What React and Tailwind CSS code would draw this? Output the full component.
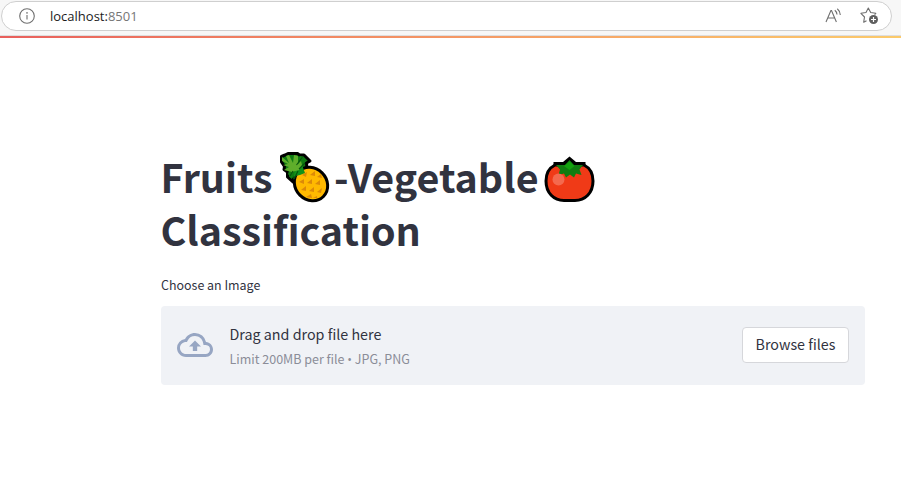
function InfoIcon() {
  return (
    <svg className="ml-[17px] size-4 shrink-0" viewBox="0 0 16 16" fill="none" stroke="#6f6f6f">
      <circle cx="8" cy="8" r="7.300" strokeWidth="1.1" />
      <path d="M8 7v4.500" strokeWidth="1.1" />
      <circle cx="8" cy="4.900" r=".8" fill="#6f6f6f" stroke="none" />
    </svg>
  );
}

function ReadAloudIcon() {
  return (
    <svg className="h-4 w-[17px]" viewBox="0 0 17 16" fill="none" stroke="#6f6f6f" strokeWidth="1.1">
      <path d="M1 14 5.900 2.500h.6L11.400 14M2.800 10h6.800" />
      <path d="M9.800 2.200q2 1.500 2.200 4.300M12.300.8q2.700 2.200 3 6.200" />
    </svg>
  );
}

function AddFavoriteIcon() {
  return (
    <svg className="h-[18px] w-[19px]" viewBox="0 0 19 18" fill="none">
      <path
        d="M6.500 13.700 3.700 15.200l.8-5.200L.9 6.300 6 5.500 8.300 1l2.400 4.500 5.100.8-1.200 1.300"
        stroke="#6f6f6f"
        strokeWidth="1.1"
        strokeLinejoin="round"
      />
      <circle cx="13.500" cy="12.500" r="4.500" fill="#5f5f5f" />
      <path d="M13.500 10v5M11 12.500h5" stroke="#fff" strokeWidth="1.2" />
    </svg>
  );
}

function Pineapple() {
  return (
    <svg className="-my-1 ml-[6px] mr-[4.500px] inline-block h-[52px] w-[51px] align-[-6px]" viewBox="0 0 51 52">
      <path
        d="M2.500 11V5.500L6 4 9 2.500h9.500l2 1.500H25l6 6-3.500 2 .5 6-7 7-4 1-2.500 2-.5 3-5.500-5V21L5 18.500l.5-3z"
        fill="#0e7a12"
        stroke="#000"
        strokeWidth="3"
        strokeLinejoin="round"
      />
      <ellipse cx="32" cy="33" rx="15.700" ry="17.600" transform="rotate(-45 32 33)" fill="#ffb900" stroke="#000" strokeWidth="3" />
      <g fill="#dc8a08">
        <path d="m23 24 5-3-1 5zM31 24l5-4v5zM38 26l4-3 1 4zM20 31l5-3v5zM28 32l5-4v5zM36 33l5-4v5zM22 39l5-4v5zM30 40l5-4v5zM38 41l5-4-1 5zM27 46l5-3 1 4zM34 47l4-2v2z" />
      </g>
      <path d="m13 13 8-8 4 1-3 5 6-2-4 4v5l-4-1-3 7-2-5-3 8-3-4 2-6z" fill="#107c10" />
      <path d="M17 14h6l3 8-5 2-5 1-2 4z" fill="#119219" />
      <path
        d="M3 10V6l7 6-3-7 3-1 4 8 1-8 4 1v8l3-3 1 4-3 5-7 2-8-2 5-3-6-2 5-1z"
        fill="#5fae2b"
      />
      <path d="m17.500 14 6-8M20 18l6-6M14 20l-3 5M19 20l-4 8" stroke="#08520f" strokeWidth="1.1" />
    </svg>
  );
}

function Tomato() {
  return (
    <svg className="-my-1 ml-[5px] inline-block h-[47px] w-[51px] align-[-6px]" viewBox="0 0 51 47">
      <path
        d="M11 9C5 12 2 18 2 25c0 12 8 19.500 18 19.500h11c10 0 18-7.500 18-19.500 0-7-3-13-9-16z"
        fill="#f03a17"
        stroke="#000"
        strokeWidth="3"
      />
      <path d="M9.500 6H19l6.500-5.500L32 6h9.500v4h-32z" fill="#000" />
      <path d="M12 9h9l4.500-5L30 9h9l-3.500 4.500 2 5.500-5.500-1.500-2 4-4-3-4 3-2-4-5.500 1.500 1.500-5.500z" fill="#107c10" />
      <path d="m20 10 5.500-4.500 5 4.500-5 4z" fill="#13a10e" />
      <circle cx="14.500" cy="23.500" r="6" fill="#f4694e" />
    </svg>
  );
}

function CloudUploadIcon() {
  return (
    <svg className="mb-px size-9 shrink-0" viewBox="0 0 24 24" fill="#97a6c3">
      <path d="M19.350 10.040A7.490 7.490 0 0 0 12 4C9.110 4 6.600 5.640 5.350 8.040A5.994 5.994 0 0 0 0 14c0 3.310 2.690 6 6 6h13c2.760 0 5-2.240 5-5 0-2.640-2.050-4.780-4.650-4.960zM19 18H6c-2.210 0-4-1.790-4-4 0-2.050 1.530-3.760 3.560-3.970l1.070-.11.5-.95A5.469 5.469 0 0 1 12 6c2.620 0 4.880 1.860 5.390 4.430l.3 1.500 1.530.11A2.980 2.980 0 0 1 22 15c0 1.650-1.350 3-3 3zM8 13h2.550v3h2.900v-3H16l-4-4z" />
    </svg>
  );
}

export default function App() {
  return (
    <div className="h-[483px] w-full overflow-hidden bg-white font-['Noto_Sans_CJK_SC',sans-serif] text-[#31333f]">
      <header className="h-9 border-b border-[#dedede] bg-[#f7f7f7] pl-px pr-[9px] pt-px">
        <div className="flex h-[30px] items-center rounded-full border border-[#cfcfcf] bg-white">
          <InfoIcon />
          <div className="ml-[15px] font-['Open_Sans',sans-serif] text-[13px] leading-5 text-[#1b1b1b]">
            localhost:<span className="text-[#767676]">8501</span>
          </div>
          <div className="ml-auto mr-[12px] flex items-center gap-[18px]">
            <ReadAloudIcon />
            <AddFavoriteIcon />
          </div>
        </div>
      </header>
      <div className="h-[2px] bg-gradient-to-r from-[#e85f5c] to-[#fbca6b]" />
      <main className="ml-[161px] w-[704px] pt-[111px]">
        <h1 className="-ml-[0.5px] whitespace-nowrap text-[39.4px] font-bold leading-[53px]">
          Fruits
          <Pineapple />
          -Vegetable
          <Tomato />
          <br />
          Classification
        </h1>
        <p className="mt-[20px] text-[12.45px] leading-5">Choose an Image</p>
        <section className="mt-[11px] flex h-[79px] items-center rounded bg-[#f0f2f6] px-4">
          <CloudUploadIcon />
          <div className="ml-[16.500px] pt-[2px]">
            <div className="text-[14.3px] leading-[24px]">Drag and drop file here</div>
            <div className="text-[12.5px] leading-[25px] text-[#8b8d98]">
              Limit 200MB per file <span className="font-['Open_Sans',sans-serif]">•</span> JPG, PNG
            </div>
          </div>
          <button className="mb-[2px] ml-auto h-9 w-[107px] rounded border border-[#d6d7db] bg-white pb-px text-[14.3px] leading-6">
            Browse files
          </button>
        </section>
      </main>
    </div>
  );
}
